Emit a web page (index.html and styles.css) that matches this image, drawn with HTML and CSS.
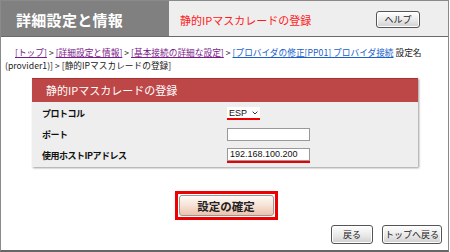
FILE: index.html
```html
<!DOCTYPE html>
<html lang="ja">
<head>
<meta charset="utf-8">
<link rel="stylesheet" href="styles.css">
</head>
<body>
<div class="frame">
  <div class="header">
    <div class="title-box"><span class="title">詳細設定と情報</span></div>
    <div class="sub-box">
      <span class="subtitle">静的IPマスカレードの登録</span>
      <span class="btn help">ヘルプ</span>
    </div>
  </div>
  <div class="crumbs"><a class="v">[トップ]</a> &gt; <a class="v">[詳細設定と情報]</a> &gt; <a class="v">[基本接続の詳細な設定]</a> &gt; <a class="b">[プロバイダの修正[PP01] プロバイダ接続</a> 設定名<br>(provider1)] &gt; [静的IPマスカレードの登録]</div>
  <div class="panel">
    <div class="panel-head">静的IPマスカレードの登録</div>
    <div class="panel-body">
      <div class="row">
        <span class="label">プロトコル</span>
        <span class="field mark"><span class="select">ESP <svg width="9" height="6" viewBox="0 0 9 6"><path d="M1 1 L4.5 4.5 L8 1" fill="none" stroke="#222" stroke-width="1.4"/></svg></span></span>
      </div>
      <div class="row">
        <span class="label">ポート</span>
        <span class="field"><span class="input"></span></span>
      </div>
      <div class="row">
        <span class="label">使用ホストIPアドレス</span>
        <span class="field mark"><span class="input">192.168.100.200</span></span>
      </div>
    </div>
  </div>
  <div class="confirm-wrap">
    <div class="confirm-box"><span class="confirm">設定の確定</span></div>
  </div>
  <div class="footer">
    <span class="btn back">戻る</span>
    <span class="btn top">トップへ戻る</span>
  </div>
</div>
</body>
</html>
```
FILE: styles.css
```css
html, body {
  margin: 0;
  padding: 0;
  background: #fff;
}
body {
  width: 450px;
  height: 252px;
  overflow: hidden;
  font-family: "Noto Sans CJK JP", "Liberation Sans", sans-serif;
}
.frame {
  box-sizing: border-box;
  width: 449px;
  height: 252px;
  border: 1px solid #8a8a8a;
  border-bottom: 2px solid #666;
  display: flex;
  flex-direction: column;
}
.header {
  display: flex;
  height: 35px;
  flex-shrink: 0;
  border-bottom: 1px solid #6a6a6a;
}
.title-box {
  width: 168px;
  background: #808080;
  display: flex;
  align-items: center;
  padding-left: 15px;
  box-sizing: border-box;
}
.title {
  color: #fff;
  font-size: 15px;
  font-weight: bold;
  letter-spacing: 0.3px;
  padding-top: 2px;
}
.sub-box {
  flex: 1;
  background: #eeeeee;
  display: flex;
  align-items: center;
  justify-content: space-between;
  padding: 2px 28px 0 11px;
}
.subtitle {
  color: #ff1a1a;
  font-size: 11px;
}
.btn {
  display: inline-flex;
  align-items: center;
  justify-content: center;
  box-sizing: border-box;
  border: 1px solid #555;
  border-radius: 3px;
  background: linear-gradient(#ffffff, #e6e6e6 60%, #cfcfcf);
  box-shadow: inset 0 0 0 1px #fff;
  font-size: 9px;
  color: #222;
  flex-shrink: 0;
}
.help {
  width: 44px;
  height: 17px;
}
.crumbs {
  margin-top: 9px;
  padding: 0 4px 0 4px;
  text-indent: 10px;
  font-size: 8.7px;
  line-height: 13px;
  color: #222;
  white-space: nowrap;
  flex-shrink: 0;
}
.crumbs a { text-decoration: underline; }
.crumbs a.v { color: #7a1a8a; }
.crumbs a.b { color: #1a5fc8; }
.panel {
  margin: 6px 0 0 31px;
  width: 386px;
  box-shadow: 1px 1px 2px #9a9a9a;
  background: #eeeeee;
  flex-shrink: 0;
}
.panel-head {
  background: #bd4646;
  color: #fff;
  font-size: 11px;
  height: 23px;
  line-height: 23px;
  padding-left: 14px;
  border-top: 1px solid #a33;
}
.panel-body {
  padding: 1px 0 1px 10px;
}
.row {
  display: flex;
  align-items: center;
  height: 21px;
}
.label {
  width: 185px;
  font-size: 9px;
  letter-spacing: -0.5px;
  font-weight: bold;
  color: #111;
}
.field {
  display: inline-flex;
  flex-direction: column;
}
.mark {
  border-bottom: 2px solid #ee0000;
}
.select {
  display: inline-flex;
  align-items: center;
  gap: 5px;
  height: 11px;
  padding: 0 2px 0 2px;
  background: #fff;
  font-family: "Liberation Sans", sans-serif;
  font-size: 9px;
  color: #111;
  width: 29px;
}
.input {
  box-sizing: border-box;
  display: block;
  width: 83px;
  height: 13px;
  background: #fff;
  border: 1px solid #999;
  font-family: "Liberation Sans", sans-serif;
  font-size: 9px;
  line-height: 11px;
  padding-left: 2px;
  color: #111;
}
.confirm-wrap {
  display: flex;
  justify-content: center;
  margin-top: 24px;
  padding-left: 3px;
  flex-shrink: 0;
}
.confirm-box {
  border: 3px solid #ee0000;
  padding: 1px;
  background: #fff;
}
.confirm {
  display: flex;
  align-items: center;
  justify-content: center;
  width: 95px;
  height: 21px;
  box-sizing: border-box;
  border: 1px solid #999;
  border-radius: 3px;
  background: linear-gradient(#fffaf6, #f6e2d6 50%, #ecc3ac);
  font-size: 11.5px;
  font-weight: bold;
  color: #222;
}
.footer {
  display: flex;
  justify-content: flex-end;
  gap: 9px;
  padding-right: 6px;
  margin-top: 5px;
  flex-shrink: 0;
}
.back {
  width: 42px;
  height: 19px;
}
.top {
  width: 60px;
  height: 19px;
}
```
